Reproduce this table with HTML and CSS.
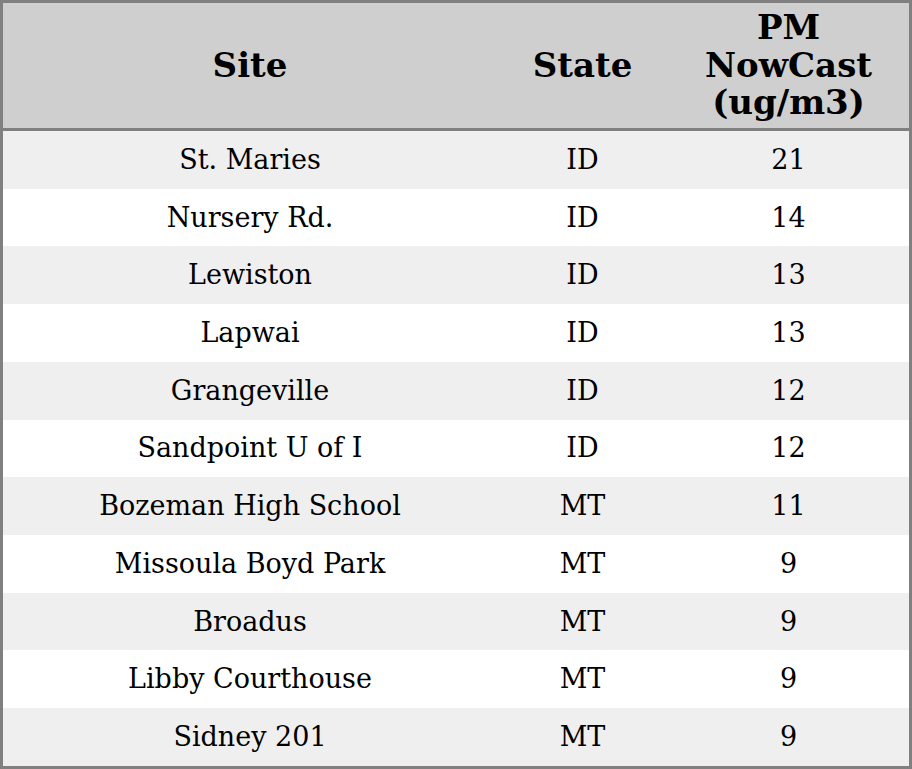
FILE: index.html
```html
<!DOCTYPE html>
<html>
<head>
<meta charset="utf-8">
<link rel="stylesheet" href="styles.css">
</head>
<body>
<table class="aq-table">
  <colgroup>
    <col class="col-site">
    <col class="col-state">
    <col class="col-pm">
  </colgroup>
  <thead>
    <tr><th>Site</th><th>State</th><th>PM<br>NowCast<br>(ug/m3)</th></tr>
  </thead>
  <tbody>
    <tr><td>St. Maries</td><td>ID</td><td>21</td></tr>
    <tr><td>Nursery Rd.</td><td>ID</td><td>14</td></tr>
    <tr><td>Lewiston</td><td>ID</td><td>13</td></tr>
    <tr><td>Lapwai</td><td>ID</td><td>13</td></tr>
    <tr><td>Grangeville</td><td>ID</td><td>12</td></tr>
    <tr><td>Sandpoint U of I</td><td>ID</td><td>12</td></tr>
    <tr><td>Bozeman High School</td><td>MT</td><td>11</td></tr>
    <tr><td>Missoula Boyd Park</td><td>MT</td><td>9</td></tr>
    <tr><td>Broadus</td><td>MT</td><td>9</td></tr>
    <tr><td>Libby Courthouse</td><td>MT</td><td>9</td></tr>
    <tr><td>Sidney 201</td><td>MT</td><td>9</td></tr>
  </tbody>
</table>
</body>
</html>
```
FILE: styles.css
```css
html, body {
  margin: 0;
  padding: 0;
  background: #ffffff;
}
.aq-table {
  width: 912px;
  border-collapse: separate;
  border-spacing: 0;
  border: 3px solid #808080;
  font-family: "DejaVu Serif", serif;
  color: #000;
  table-layout: fixed;
}
.col-site { width: 494px; }
.col-state { width: 171px; }
.col-pm { width: 241px; }
.aq-table th {
  background: #cfcfcf;
  font-size: 34px;
  font-weight: bold;
  line-height: 37.5px;
  height: 128px;
  padding: 0;
  text-align: center;
  vertical-align: middle;
  border-bottom: 3px solid #808080;
  box-sizing: border-box;
}
.aq-table td {
  font-size: 27px;
  line-height: 30px;
  height: 57.73px;
  padding: 0;
  text-align: center;
  vertical-align: middle;
}
.aq-table tbody tr:nth-child(odd) td { background: #efefef; }
.aq-table tbody tr:nth-child(even) td { background: #ffffff; }
```
